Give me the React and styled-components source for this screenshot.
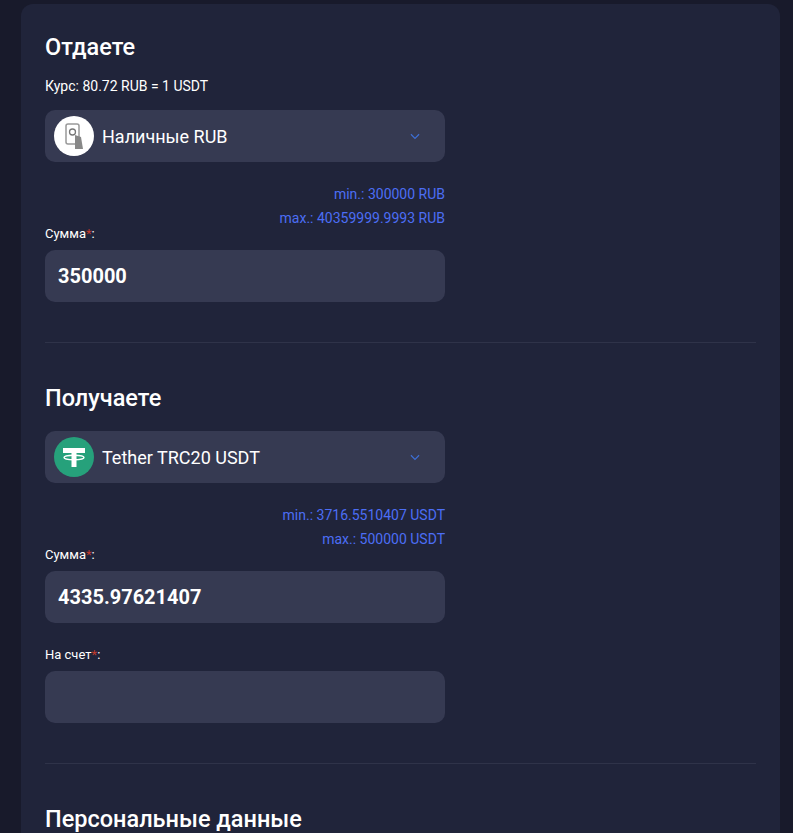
import React from "react";
import styled, { createGlobalStyle } from "styled-components";

const G = createGlobalStyle`
  body{margin:0;background:#181a2b;font-family:Roboto,"Noto Sans",sans-serif;color:#fff;}
`;
const Card = styled.div`
  margin:4px 13px 0 21px;background:#20243a;border-radius:12px 12px 0 0;
  padding:24px 24px 0;min-height:829px;box-sizing:border-box;overflow:hidden;
`;
const Section = styled.div`display:flex;flex-direction:column;width:400px;`;
const Title = styled.h2`font-size:23.5px;font-weight:500;margin:${p=>p.$mt ?? 4}px 0 0;line-height:30px;`;
const Rate = styled.div`font-size:14px;margin-top:16px;line-height:16px;`;
const Select = styled.div`
  height:52px;background:#363a52;border-radius:10px;display:flex;align-items:center;
  padding:0 9px;gap:8px;margin-top:${p=>p.$mt}px;font-size:18px;
`;
const Icon = styled.div`width:40px;height:40px;border-radius:50%;background:${p=>p.$bg};display:flex;align-items:center;justify-content:center;flex-shrink:0;`;
const Name = styled.div`flex:1;`;
const Limits = styled.div`
  display:flex;flex-direction:column;align-items:flex-end;color:#4c6ef5;font-size:14px;
  line-height:24px;margin-top:20px;
`;
const Label = styled.div`font-size:13px;line-height:16px;margin-top:${p=>p.$mt||0}px;span{color:#c0392b;}`;
const Input = styled.div`
  height:52px;background:#363a52;border-radius:10px;margin-top:8px;display:flex;align-items:center;
  padding:0 13px;font-size:20px;font-weight:700;
`;
const Divider = styled.div`height:1px;background:#2f3349;margin:40px 0 40px;`;

const Chevron = () => (
  <svg width="14" height="14" viewBox="0 0 24 24" fill="none" stroke="#3d6fd6" strokeWidth="2" style={{marginRight:14}}><path d="M5 9l7 7 7-7"/></svg>
);

export default function App(){
  return (<>
    <G/>
    <Card>
      <Section>
        <Title>Отдаете</Title>
        <Rate>Курс: 80.72 RUB = 1 USDT</Rate>
        <Select $mt={16}>
          <Icon $bg="#fff">
            <svg width="26" height="30" viewBox="0 0 26 30"><rect x="5" y="3" width="13" height="20" rx="2" fill="none" stroke="#999" strokeWidth="1.5"/><circle cx="11.5" cy="11" r="3" fill="none" stroke="#777" strokeWidth="1.3"/><path d="M14 14 L20 16 L22 28 L14 28 Z" fill="#888"/></svg>
          </Icon>
          <Name>Наличные RUB</Name><Chevron/>
        </Select>
        <Limits><div>min.: 300000 RUB</div><div>max.: 40359999.9993 RUB</div></Limits>
        <Label $mt={-4}>Сумма<span>*</span>:</Label>
        <Input>350000</Input>
      </Section>
      <Divider/>
      <Section>
        <Title $mt={0}>Получаете</Title>
        <Select $mt={18}>
          <Icon $bg="#26a17b">
            <svg width="30" height="30" viewBox="0 0 30 30" fill="#fff"><rect x="4" y="6" width="22" height="5"/><rect x="12.5" y="9" width="5" height="16"/><ellipse cx="15" cy="15.5" rx="10" ry="2.3" fill="none" stroke="#fff" strokeWidth="1.4"/></svg>
          </Icon>
          <Name>Tether TRC20 USDT</Name><Chevron/>
        </Select>
        <Limits><div>min.: 3716.5510407 USDT</div><div>max.: 500000 USDT</div></Limits>
        <Label $mt={-4}>Сумма<span>*</span>:</Label>
        <Input>4335.97621407</Input>
        <Label $mt={24}>На счет<span>*</span>:</Label>
        <Input/>
      </Section>
      <Divider/>
      <Title $mt={0}>Персональные данные</Title>
    </Card>
  </>);
}
